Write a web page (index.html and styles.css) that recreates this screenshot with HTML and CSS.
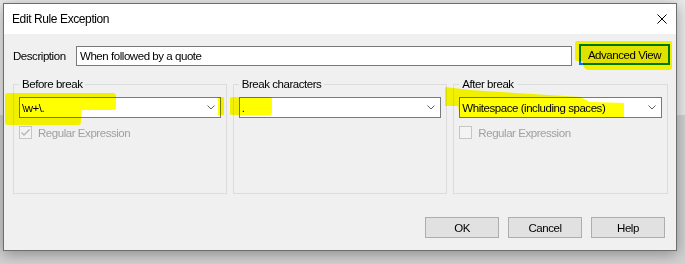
FILE: index.html
```html
<!DOCTYPE html>
<html lang="en">
<head>
    <meta charset="UTF-8">
    <title>Edit Rule Exception</title>
    <link rel="stylesheet" href="styles.css">
</head>
<body>
    <div class="screen">
        <div class="dialog">
            <div class="titlebar">
                <span class="title">Edit Rule Exception</span>
                <svg class="close" width="10" height="10" viewBox="0 0 10 10">
                    <path d="M0.5 0.5L9.5 9.5M9.5 0.5L0.5 9.5" stroke="#000" stroke-width="1" fill="none"/>
                </svg>
            </div>
            <div class="body">
                <div class="desc-row">
                    <label class="desc-label">Description</label>
                    <div class="textbox">When followed by a quote</div>
                    <button class="btn btn-advanced">Advanced View</button>
                </div>
                <div class="groups">
                    <fieldset class="group group-first">
                        <legend>Before break</legend>
                        <div class="combo">
                            <span>\w+\.</span>
                            <svg width="8" height="5" viewBox="0 0 8 5"><path d="M0.5 0.5L4 4L7.5 0.5" stroke="#606060" fill="none"/></svg>
                        </div>
                        <div class="check">
                            <span class="box">
                                <svg width="11" height="11" viewBox="0 0 11 11"><path d="M1.5 5.5L4 8L9.5 2.5" stroke="#b4b4b4" stroke-width="1.3" fill="none"/></svg>
                            </span>
                            Regular Expression
                        </div>
                    </fieldset>
                    <fieldset class="group">
                        <legend>Break characters</legend>
                        <div class="combo">
                            <span>.</span>
                            <svg width="8" height="5" viewBox="0 0 8 5"><path d="M0.5 0.5L4 4L7.5 0.5" stroke="#606060" fill="none"/></svg>
                        </div>
                    </fieldset>
                    <fieldset class="group">
                        <legend>After break</legend>
                        <div class="combo">
                            <span>Whitespace (including spaces)</span>
                            <svg width="8" height="5" viewBox="0 0 8 5"><path d="M0.5 0.5L4 4L7.5 0.5" stroke="#606060" fill="none"/></svg>
                        </div>
                        <div class="check">
                            <span class="box"></span>
                            Regular Expression
                        </div>
                    </fieldset>
                </div>
                <div class="actions">
                    <button class="btn">OK</button>
                    <button class="btn">Cancel</button>
                    <button class="btn">Help</button>
                </div>
            </div>
        </div>

        <!-- highlighter strokes drawn over the dialog -->
        <div class="mark mark-adv-a"></div>
        <div class="mark mark-adv-b"></div>
        <div class="mark mark-before-a"></div>
        <div class="mark mark-before-b"></div>
        <div class="mark mark-before-c"></div>
        <div class="mark mark-break"></div>
        <div class="mark mark-after"></div>
    </div>
</body>
</html>
```

FILE: styles.css
```css
body {
    margin: 0;
    width: 685px;
    height: 264px;
    overflow: hidden;
    font-family: "Liberation Sans", Arial, sans-serif;
    font-size: 11.5px;
    letter-spacing: -0.45px;
    color: #000;
    background: linear-gradient(#eaeaea 115px, #d2d2d2 115px);
}
.screen {
    position: relative;
    height: 264px;
    padding: 3px 0 0 3px;
    box-sizing: border-box;
}
.dialog {
    width: 674px;
    height: 248px;
    box-sizing: border-box;
    border: 1px solid #6d6d6d;
    background: #f0f0f0;
    box-shadow: 0 3px 14px rgba(0, 0, 0, 0.35);
    display: flex;
    flex-direction: column;
}
.titlebar {
    height: 30px;
    flex-shrink: 0;
    background: #fff;
    display: flex;
    align-items: center;
    justify-content: space-between;
    padding: 0 9px 0 8px;
}
.title {
    font-size: 12px;
    letter-spacing: -0.4px;
}
.body {
    flex: 1;
    display: flex;
    flex-direction: column;
    padding: 0 8px 12px 9px;
}
.desc-row {
    display: flex;
    align-items: flex-start;
    margin-top: 10px;
    height: 21px;
}
.desc-label {
    width: 63px;
    flex-shrink: 0;
    margin-top: 2px;
    line-height: 20px;
}
.textbox {
    width: 496px;
    height: 20px;
    flex-shrink: 0;
    box-sizing: border-box;
    margin-top: 2px;
    padding-left: 3px;
    line-height: 18px;
    border: 1px solid #7a7a7a;
    background: #fff;
}
.btn {
    width: 74px;
    height: 21px;
    flex-shrink: 0;
    box-sizing: border-box;
    padding: 0;
    font: inherit;
    letter-spacing: inherit;
    color: #000;
    background: #e1e1e1;
    border: 1px solid #adadad;
}
.btn-advanced {
    width: 91px;
    margin-left: 7px;
    border: 2px solid #0078d7;
}
.groups {
    display: flex;
    gap: 6px;
    margin-top: 13px;
}
.group {
    width: 215px;
    height: 116px;
    box-sizing: border-box;
    margin: 0;
    min-width: 0;
    padding: 0 5px;
    border: 1px solid #dcdcdc;
}
.group-first {
    width: 214px;
}
legend {
    padding: 0 3px;
    line-height: 12px;
}
.combo {
    margin-top: 7px;
    height: 21px;
    box-sizing: border-box;
    border: 1px solid #7a7a7a;
    background: #fff;
    display: flex;
    align-items: center;
    justify-content: space-between;
    padding: 0 5px 0 2px;
}
.check {
    margin-top: 8px;
    display: flex;
    align-items: center;
    color: #a0a0a0;
}
.box {
    width: 13px;
    height: 13px;
    box-sizing: border-box;
    margin-right: 6px;
    border: 1px solid #c6c6c6;
    background: #f3f3f3;
    display: flex;
}
.actions {
    margin-top: auto;
    display: flex;
    justify-content: flex-end;
    gap: 9px;
    padding-right: 3px;
}
.mark {
    position: absolute;
    background: #ffff00;
    mix-blend-mode: multiply;
}
.mark-adv-a {
    left: 575px;
    top: 41px;
    width: 97px;
    height: 20px;
    border-radius: 2px;
}
.mark-adv-b {
    left: 583px;
    top: 41px;
    width: 89px;
    height: 29px;
    border-radius: 2px 2px 3px 6px;
}
.mark-before-a {
    left: 5px;
    top: 93px;
    width: 111px;
    height: 17px;
    border-radius: 3px;
}
.mark-before-b {
    left: 5px;
    top: 104px;
    width: 76px;
    height: 21px;
    border-radius: 0 0 3px 3px;
}
.mark-before-c {
    left: 218px;
    top: 97px;
    width: 6px;
    height: 18px;
}
.mark-break {
    left: 230px;
    top: 97px;
    width: 42px;
    height: 18px;
    border-radius: 2px;
}
.mark-after {
    left: 445px;
    top: 87px;
    width: 179px;
    height: 32px;
    clip-path: polygon(0 0, 25px 3px, 135px 10px, 145px 15px, 179px 16px, 179px 31px, 15px 31px, 13px 19px, 0 19px);
}
```
